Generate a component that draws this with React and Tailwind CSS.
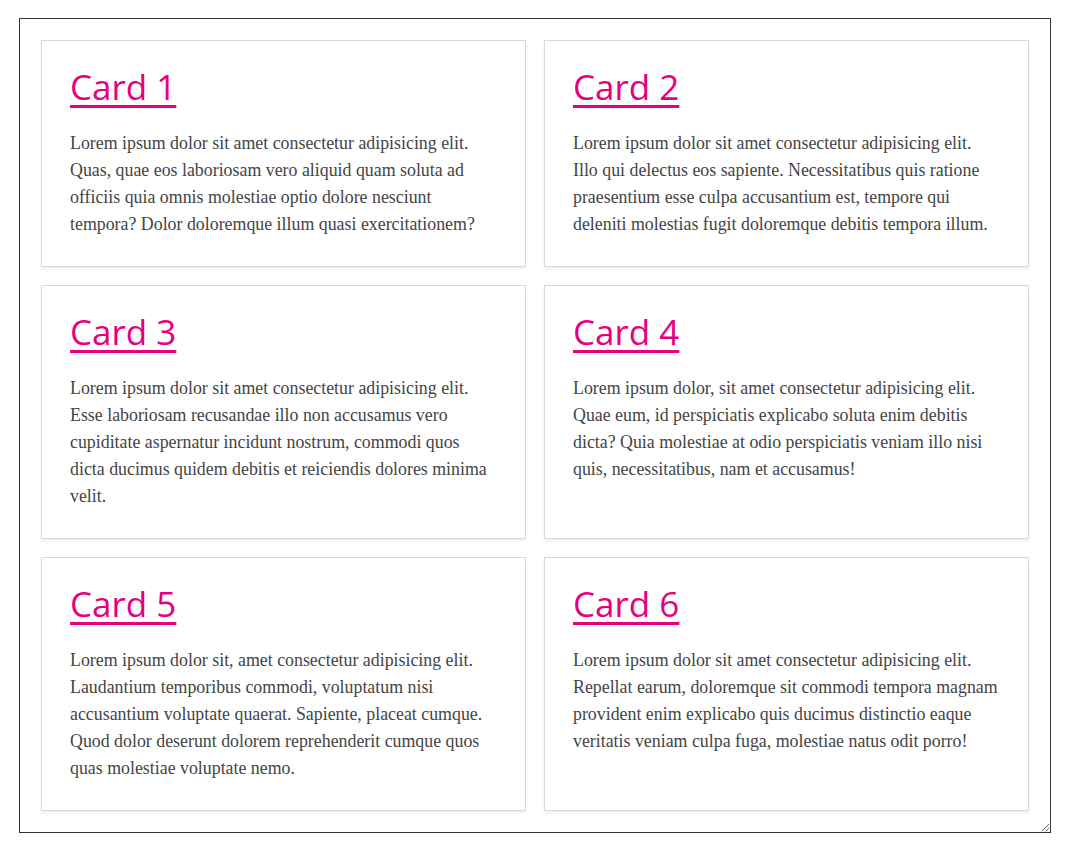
const cards = [
  {
    title: 'Card 1',
    text: 'Lorem ipsum dolor sit amet consectetur adipisicing elit. Quas, quae eos laboriosam vero aliquid quam soluta ad officiis quia omnis molestiae optio dolore nesciunt tempora? Dolor doloremque illum quasi exercitationem?',
  },
  {
    title: 'Card 2',
    text: 'Lorem ipsum dolor sit amet consectetur adipisicing elit. Illo qui delectus eos sapiente. Necessitatibus quis ratione praesentium esse culpa accusantium est, tempore qui deleniti molestias fugit doloremque debitis tempora illum.',
  },
  {
    title: 'Card 3',
    text: 'Lorem ipsum dolor sit amet consectetur adipisicing elit. Esse laboriosam recusandae illo non accusamus vero cupiditate aspernatur incidunt nostrum, commodi quos dicta ducimus quidem debitis et reiciendis dolores minima velit.',
  },
  {
    title: 'Card 4',
    text: 'Lorem ipsum dolor, sit amet consectetur adipisicing elit. Quae eum, id perspiciatis explicabo soluta enim debitis dicta? Quia molestiae at odio perspiciatis veniam illo nisi quis, necessitatibus, nam et accusamus!',
  },
  {
    title: 'Card 5',
    text: 'Lorem ipsum dolor sit, amet consectetur adipisicing elit. Laudantium temporibus commodi, voluptatum nisi accusantium voluptate quaerat. Sapiente, placeat cumque. Quod dolor deserunt dolorem reprehenderit cumque quos quas molestiae voluptate nemo.',
  },
  {
    title: 'Card 6',
    text: 'Lorem ipsum dolor sit amet consectetur adipisicing elit. Repellat earum, doloremque sit commodi tempora magnam provident enim explicabo quis ducimus distinctio eaque veritatis veniam culpa fuga, molestiae natus odit porro!',
  },
];

const Card = ({ title, text }) => (
  <div className="border border-[#d9d9d9] bg-white p-[28px] shadow-[0_2px_3px_rgba(0,0,0,0.07)]">
    <h2 className="mt-[3px] mb-[28px] font-['Open_Sans',sans-serif] text-[35px] font-normal leading-[30px] text-[#e6007e]">
      <a href="#" className="underline decoration-[3px] underline-offset-[5px]">
        {title}
      </a>
    </h2>
    <p className="font-['Liberation_Serif',serif] text-[17.85px] leading-[27px] text-[#444]">{text}</p>
  </div>
);

const App = () => {
  return (
    <div className="min-h-screen bg-white pt-[18px] pb-[19px]">
      <div className="mx-[19px] resize overflow-auto border border-[#333] p-[21px]">
        <div className="grid grid-cols-2 gap-[18px]">
          {cards.map((card) => (
            <Card key={card.title} title={card.title} text={card.text} />
          ))}
        </div>
      </div>
    </div>
  );
};

export default App;
